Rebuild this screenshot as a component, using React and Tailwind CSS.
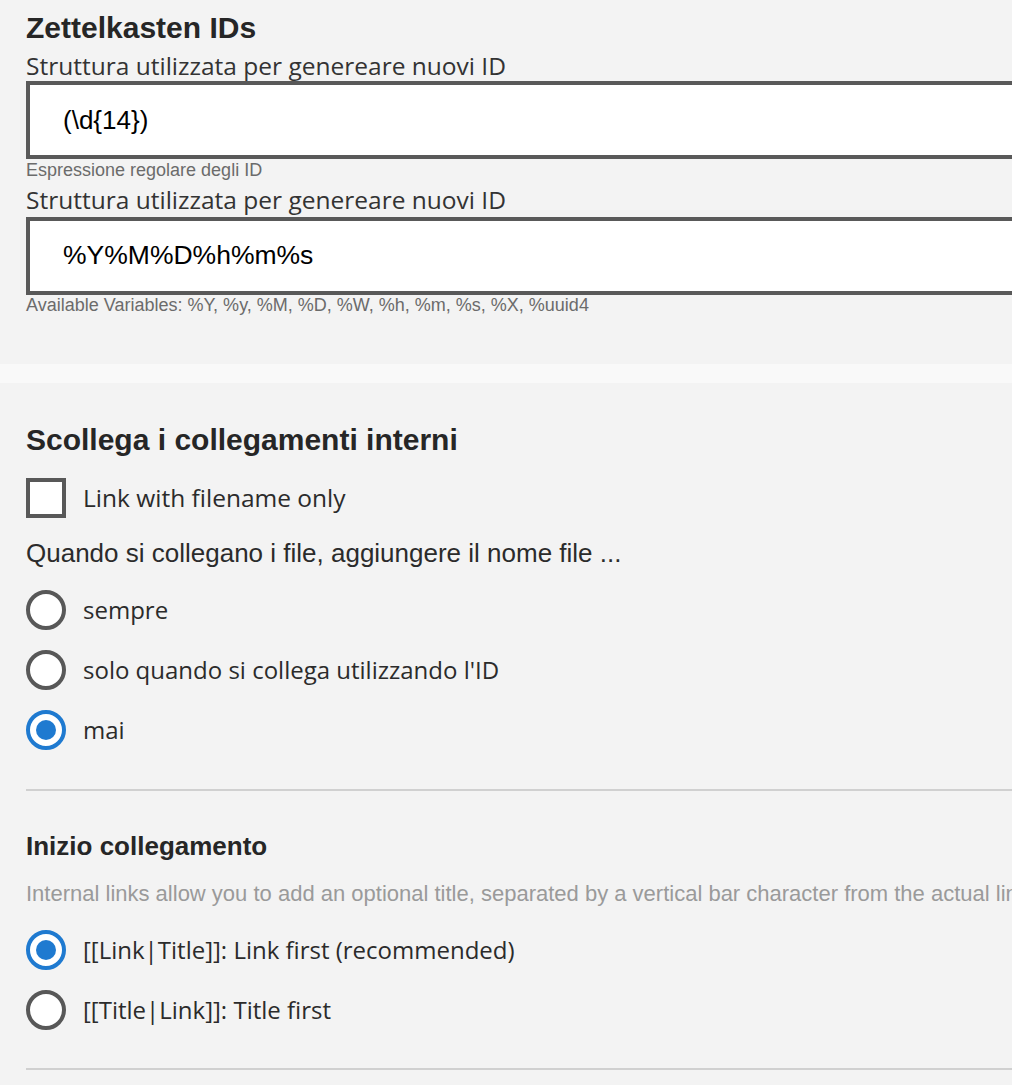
import React from "react";

const seg = { fontFamily: '"Open Sans", "Noto Sans", sans-serif' };
const ari = { fontFamily: '"Liberation Sans", Arial, sans-serif' };

function Radio({ checked, label }) {
  return (
    <div className="flex items-center h-[40px]">
      {checked ? (
        <div className="w-[40px] h-[40px] rounded-full border-[4px] border-[#1f7ad0] bg-white flex items-center justify-center shrink-0">
          <div className="w-[20px] h-[20px] rounded-full bg-[#1f7ad0]" />
        </div>
      ) : (
        <div className="w-[40px] h-[40px] rounded-full border-[4px] border-[#585858] bg-white shrink-0" />
      )}
      <span className="ml-[17px] text-[24px] text-[#2b2b2b] leading-[30px]" style={seg}>
        {label}
      </span>
    </div>
  );
}

export default function App() {
  return (
    <div className="w-[1012px] h-[1085px] overflow-hidden bg-[#f3f3f3]">
      <div className="w-[1400px]">
        <section className="h-[364px] px-[26px] pt-[13px]">
          <h2 className="text-[30px] font-bold leading-[30px] text-[#262626]" style={ari}>
            Zettelkasten IDs
          </h2>
          <div className="mt-[8px] text-[24.5px] leading-[30px] text-[#333]" style={seg}>
            Struttura utilizzata per genereare nuovi ID
          </div>
          <div className="h-[78px] border-[4px] border-[#595959] bg-white flex items-center pl-[33px]">
            <span className="text-[26px] text-black" style={ari}>(\d{"{"}14{"}"})</span>
          </div>
          <div className="mt-[1px] text-[18px] leading-[20px] text-[#6b6b6b]" style={ari}>
            Espressione regolare degli ID
          </div>
          <div className="mt-[5px] text-[24.5px] leading-[30px] text-[#333]" style={seg}>
            Struttura utilizzata per genereare nuovi ID
          </div>
          <div className="mt-[2px] h-[78px] border-[4px] border-[#595959] bg-white flex items-center pl-[33px]">
            <span className="text-[26.5px] text-black" style={ari}>%Y%M%D%h%m%s</span>
          </div>
          <div className="text-[18px] leading-[20px] text-[#6b6b6b]" style={ari}>
            Available Variables: %Y, %y, %M, %D, %W, %h, %m, %s, %X, %uuid4
          </div>
        </section>
        <div className="h-[19px] bg-[#f9f9f9]" />
        <section className="px-[26px]">
          <h2 className="mt-[42px] text-[30px] font-bold leading-[30px] text-[#262626]" style={ari}>
            Scollega i collegamenti interni
          </h2>
          <div className="mt-[23px] flex items-center h-[40px]">
            <div className="w-[40px] h-[40px] border-[4px] border-[#585858] bg-white shrink-0" />
            <span className="ml-[17px] text-[24.5px] leading-[30px] text-[#2b2b2b]" style={seg}>
              Link with filename only
            </span>
          </div>
          <div className="mt-[20px] text-[26px] leading-[30px] text-[#2b2b2b]" style={ari}>
            Quando si collegano i file, aggiungere il nome file ...
          </div>
          <div className="mt-[22px] flex flex-col gap-[20px]">
            <Radio label="sempre" />
            <Radio label="solo quando si collega utilizzando l'ID" />
            <Radio checked label="mai" />
          </div>
          <div className="mt-[39px] h-[2px] bg-[#d0d0d0]" />
          <h3 className="mt-[40px] text-[26px] font-bold leading-[30px] text-[#262626]" style={ari}>
            Inizio collegamento
          </h3>
          <div className="mt-[19px] text-[22px] leading-[28px] text-[#9a9a9a] whitespace-nowrap" style={ari}>
            Internal links allow you to add an optional title, separated by a vertical bar character from the actual link.
          </div>
          <div className="mt-[22px] flex flex-col gap-[20px]">
            <Radio checked label="[[Link|Title]]: Link first (recommended)" />
            <Radio label="[[Title|Link]]: Title first" />
          </div>
          <div className="mt-[38px] h-[2px] bg-[#d0d0d0]" />
        </section>
      </div>
    </div>
  );
}
